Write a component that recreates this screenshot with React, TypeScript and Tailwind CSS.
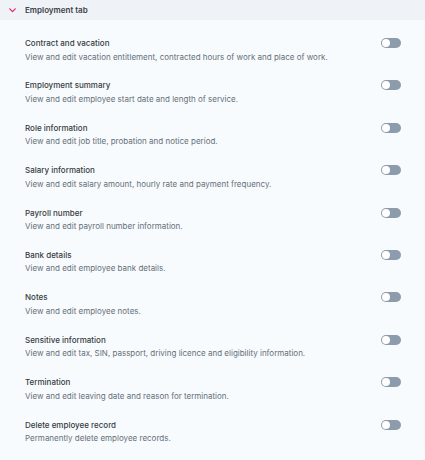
import React, { useState } from "react";

type Permission = {
  title: string;
  description: string;
};

const permissions: Permission[] = [
  { title: "Contract and vacation", description: "View and edit vacation entitlement, contracted hours of work and place of work." },
  { title: "Employment summary", description: "View and edit employee start date and length of service." },
  { title: "Role information", description: "View and edit job title, probation and notice period." },
  { title: "Salary information", description: "View and edit salary amount, hourly rate and payment frequency." },
  { title: "Payroll number", description: "View and edit payroll number information." },
  { title: "Bank details", description: "View and edit employee bank details." },
  { title: "Notes", description: "View and edit employee notes." },
  { title: "Sensitive information", description: "View and edit tax, SIN, passport, driving licence and eligibility information." },
  { title: "Termination", description: "View and edit leaving date and reason for termination." },
  { title: "Delete employee record", description: "Permanently delete employee records." },
];

const Toggle = ({ on, onClick }: { on: boolean; onClick: () => void }) => (
  <button
    onClick={onClick}
    className={`flex items-center w-[20px] h-[10px] rounded-full px-[1px] ${on ? "bg-[#e0207a] justify-end" : "bg-[#8c9cac] justify-start"}`}
  >
    <span className="block w-[8px] h-[8px] rounded-full bg-white" />
  </button>
);

export default function App() {
  const [open, setOpen] = useState(true);
  const [values, setValues] = useState<boolean[]>(permissions.map(() => false));

  return (
    <div className="w-[425px] h-[460px] bg-[#f8fbfd] overflow-hidden" style={{ fontFamily: "Inter, 'Noto Sans', sans-serif" }}>
      <div
        role="button"
        onClick={() => setOpen(!open)}
        className="flex items-center h-[20px] bg-[#eff3f7] pl-[9px]"
      >
        <svg width="7" height="5" viewBox="0 0 7 5" className={open ? "" : "-rotate-90"}>
          <path d="M0.8 0.8 L3.5 3.6 L6.2 0.8" fill="none" stroke="#e0207a" strokeWidth="1.2" strokeLinecap="round" strokeLinejoin="round" />
        </svg>
        <span className="ml-[9px] text-[8px] font-semibold text-[#3b4249]">Employment tab</span>
      </div>

      {open && (
        <div className="flex flex-col gap-[15.9px] pt-[17px] pl-[25px] pr-[24px]">
          {permissions.map((p, i) => (
            <div key={i} className="flex flex-col">
              <div className="flex items-center justify-between h-[12px]">
                <span className="text-[8px] font-medium text-[#363c42] leading-[12px]">{p.title}</span>
                <Toggle
                  on={values[i]}
                  onClick={() => setValues(values.map((v, j) => (j === i ? !v : v)))}
                />
              </div>
              <span className="text-[8px] text-[#65707a] leading-[13px] mt-[1.5px]">{p.description}</span>
            </div>
          ))}
        </div>
      )}
    </div>
  );
}
